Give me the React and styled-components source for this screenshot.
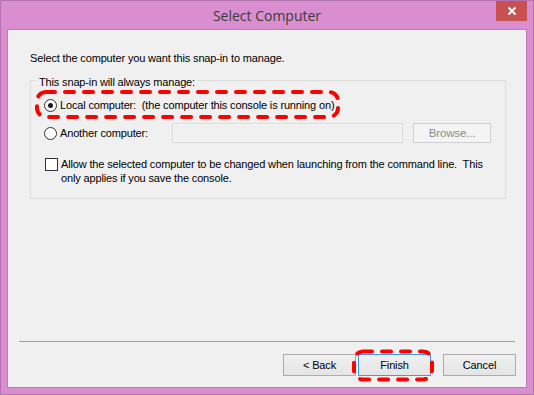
import React from "react";
import styled, { createGlobalStyle } from "styled-components";

const Global = createGlobalStyle`
  html, body { margin: 0; padding: 0; background: #d98fcf; }
  body { font-family: "Liberation Sans", Arial, sans-serif; }
  * { box-sizing: border-box; }
`;

const Win = styled.div`
  position: relative;
  width: 534px;
  height: 395px;
  background: #d98fcf;
  border: 1px solid #b573ad;
  display: flex;
  flex-direction: column;
`;

const TitleBar = styled.div`
  height: 28px;
  display: flex;
  align-items: center;
  justify-content: center;
  position: relative;
`;

const Title = styled.div`
  font-family: "Open Sans", "Noto Sans", sans-serif;
  font-size: 14px;
  color: #3a3a3a;
  margin-left: 0px;
`;

const CloseBtn = styled.div`
  position: absolute;
  right: 6px;
  top: 0;
  width: 31px;
  height: 20px;
  background: #c75050;
  display: flex;
  align-items: center;
  justify-content: center;
`;

const Client = styled.div`
  flex: 1;
  margin: 0 6px 6px 6px;
  border: 1px solid #c17ab8;
  background: #f0f0f0;
  display: flex;
  flex-direction: column;
  font-size: 11px;
  letter-spacing: -0.15px;
  color: #000;
`;

const Body = styled.div`
  padding: 22px 20px 0 22px;
  display: flex;
  flex-direction: column;
`;

const Intro = styled.div`
  line-height: 13px;
`;

const GroupBox = styled.div`
  margin-top: 15px;
  border: 1px solid #dcdcdc;
  padding: 0 0 13px 13px;
  display: flex;
  flex-direction: column;
`;

const Legend = styled.div`
  align-self: flex-start;
  margin: -5px 0 0 -8px;
  padding: 0 3px;
  background: #f0f0f0;
  line-height: 13px;
`;

const Row = styled.div`
  display: flex;
  align-items: center;
  height: 24px;
  margin-top: ${(p) => p.$mt}px;
`;

const Radio = styled.span`
  width: 13px;
  height: 13px;
  border-radius: 50%;
  border: 1px solid #333;
  background: #fff;
  display: flex;
  align-items: center;
  justify-content: center;
  flex: none;
  &::after {
    content: "";
    width: 5px;
    height: 5px;
    border-radius: 50%;
    background: ${(p) => (p.$checked ? "#1a1a1a" : "transparent")};
  }
`;

const Label = styled.span`
  margin-left: 3px;
  white-space: pre;
  width: ${(p) => (p.$w ? p.$w + "px" : "auto")};
`;

const TextInput = styled.div`
  width: 231px;
  height: 20px;
  border: 1px solid #d9d9d9;
  background: #f0f0f0;
  box-shadow: inset 0 0 0 1px #f7f7f7;
`;

const DisabledButton = styled.div`
  margin-left: 10px;
  width: 78px;
  height: 20px;
  border: 1px solid #cfcfcf;
  background: #f4f4f4;
  color: #8a8a8a;
  font-size: 11.5px;
  display: flex;
  align-items: center;
  justify-content: center;
`;

const CheckRow = styled.div`
  display: flex;
  align-items: flex-start;
  margin-top: 12px;
`;

const CheckBox = styled.span`
  width: 13px;
  height: 13px;
  border: 1px solid #333;
  background: #fff;
  margin: 1px 0 0 1px;
  flex: none;
`;

const CheckText = styled.div`
  margin-left: 3px;
  line-height: 14px;
`;

const Footer = styled.div`
  margin-top: auto;
  padding-bottom: 11px;
  display: flex;
  flex-direction: column;
`;

const Separator = styled.div`
  height: 1px;
  background: #a0a0a0;
  margin: 0 11px 0 11px;
`;

const ButtonRow = styled.div`
  margin-top: 12px;
  display: flex;
  justify-content: flex-end;
  padding-right: 10px;
`;

const Button = styled.div`
  width: 73px;
  height: 22px;
  margin-left: ${(p) => p.$ml}px;
  border: 1px solid ${(p) => (p.$default ? "#3c9bf3" : "#acacac")};
  background: linear-gradient(#f0f0f0, #e5e5e5);
  display: flex;
  align-items: center;
  justify-content: center;
  color: #000;
`;

const Overlay = styled.svg`
  position: absolute;
  left: -1px;
  top: -1px;
  width: 534px;
  height: 395px;
  pointer-events: none;
`;

export default function App() {
  return (
    <>
      <Global />
      <Win>
        <TitleBar>
          <Title>Select Computer</Title>
          <CloseBtn>
            <svg width="10" height="10" viewBox="0 0 10 10">
              <path d="M1.5 1.5 L8.5 8.5 M8.5 1.5 L1.5 8.5" stroke="#fff" strokeWidth="2" />
            </svg>
          </CloseBtn>
        </TitleBar>
        <Client>
          <Body>
            <Intro>Select the computer you want this snap-in to manage.</Intro>
            <GroupBox>
              <Legend>This snap-in will always manage:</Legend>
              <Row $mt={4}>
                <Radio $checked />
                <Label>Local computer:  (the computer this console is running on)</Label>
              </Row>
              <Row $mt={4}>
                <Radio />
                <Label $w={112}>Another computer:</Label>
                <TextInput />
                <DisabledButton>Browse...</DisabledButton>
              </Row>
              <CheckRow>
                <CheckBox />
                <CheckText>
                  Allow the selected computer to be changed when launching from the command line.&nbsp; This
                  <br />
                  only applies if you save the console.
                </CheckText>
              </CheckRow>
            </GroupBox>
          </Body>
          <Footer>
            <Separator />
            <ButtonRow>
              <Button $ml={0}>&lt; Back</Button>
              <Button $ml={2} $default>Finish</Button>
              <Button $ml={12}>Cancel</Button>
            </ButtonRow>
          </Footer>
        </Client>
        <Overlay viewBox="0 0 534 395">
          <rect x="37" y="92" width="301" height="25" rx="9" fill="none" stroke="#ff0000" strokeWidth="4" strokeDasharray="9 10" strokeLinecap="round" />
          <rect x="354" y="351.5" width="78" height="28" rx="9" fill="none" stroke="#ff0000" strokeWidth="4" strokeDasharray="9 10" strokeLinecap="round" />
        </Overlay>
      </Win>
    </>
  );
}
